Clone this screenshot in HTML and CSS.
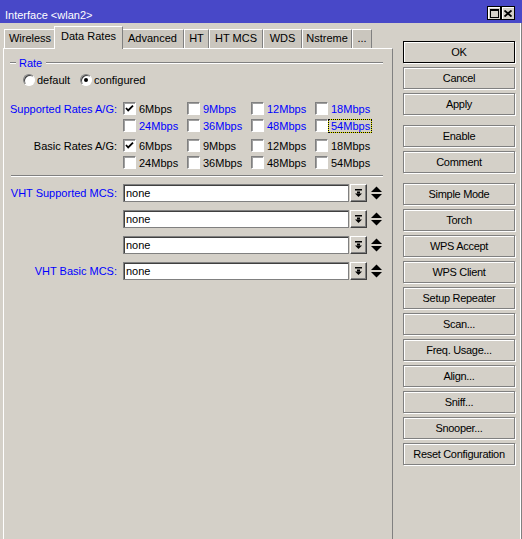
FILE: index.html
```html
<!DOCTYPE html>
<html>
<head>
<meta charset="utf-8">
<link rel="stylesheet" href="styles.css">
</head>
<body>
<div class="window">
  <div class="titlebar">
    <span class="title">Interface &lt;wlan2&gt;</span>
    <div class="tb-btns">
      <span class="tb-btn"><svg width="9" height="9" viewBox="0 0 9 9"><rect x="0.5" y="0.5" width="8" height="8" fill="none" stroke="#000"/><rect x="0" y="0" width="9" height="2" fill="#000"/></svg></span>
      <span class="tb-btn"><svg width="8" height="7" viewBox="0 0 8 7"><path d="M0.5 0.5 L7.5 6.5 M7.5 0.5 L0.5 6.5" stroke="#000" stroke-width="1.8" fill="none"/></svg></span>
    </div>
  </div>
  <div class="main">
    <div class="left">
      <div class="tabs">
        <div class="tab t-wireless">Wireless</div>
        <div class="tab active t-rates">Data Rates</div>
        <div class="tab t-adv">Advanced</div>
        <div class="tab t-ht">HT</div>
        <div class="tab t-htmcs">HT MCS</div>
        <div class="tab t-wds">WDS</div>
        <div class="tab t-nst">Nstreme</div>
        <div class="tab t-more">...</div>
      </div>
      <div class="panel">
        <div class="group-head">
          <div class="etch short"></div>
          <span class="legend">Rate</span>
          <div class="etch long"></div>
        </div>
        <div class="radio-row">
          <span class="radio"></span><span class="rtext">default</span>
          <span class="radio on"></span><span class="rtext">configured</span>
        </div>
        <div class="rates">
          <div class="rate-row">
            <div class="rlabel blue">Supported Rates A/G:</div>
            <div class="cell"><span class="cb"><svg width="11" height="11" viewBox="0 0 11 11"><polyline points="2,5 4.2,7.5 9,2.6" fill="none" stroke="#000" stroke-width="1.8"/></svg></span><span class="ctext">6Mbps</span></div>
            <div class="cell"><span class="cb"></span><span class="ctext blue">9Mbps</span></div>
            <div class="cell"><span class="cb"></span><span class="ctext blue">12Mbps</span></div>
            <div class="cell"><span class="cb"></span><span class="ctext blue">18Mbps</span></div>
          </div>
          <div class="rate-row">
            <div class="rlabel"></div>
            <div class="cell"><span class="cb"></span><span class="ctext blue">24Mbps</span></div>
            <div class="cell"><span class="cb"></span><span class="ctext blue">36Mbps</span></div>
            <div class="cell"><span class="cb"></span><span class="ctext blue">48Mbps</span></div>
            <div class="cell"><span class="cb"></span><span class="ctext blue focus">54Mbps</span></div>
          </div>
          <div class="rate-row group2">
            <div class="rlabel">Basic Rates A/G:</div>
            <div class="cell"><span class="cb"><svg width="11" height="11" viewBox="0 0 11 11"><polyline points="2,5 4.2,7.5 9,2.6" fill="none" stroke="#000" stroke-width="1.8"/></svg></span><span class="ctext">6Mbps</span></div>
            <div class="cell"><span class="cb"></span><span class="ctext">9Mbps</span></div>
            <div class="cell"><span class="cb"></span><span class="ctext">12Mbps</span></div>
            <div class="cell"><span class="cb"></span><span class="ctext">18Mbps</span></div>
          </div>
          <div class="rate-row">
            <div class="rlabel"></div>
            <div class="cell"><span class="cb"></span><span class="ctext">24Mbps</span></div>
            <div class="cell"><span class="cb"></span><span class="ctext">36Mbps</span></div>
            <div class="cell"><span class="cb"></span><span class="ctext">48Mbps</span></div>
            <div class="cell"><span class="cb"></span><span class="ctext">54Mbps</span></div>
          </div>
        </div>
        <div class="etch sep"></div>
        <div class="vht">
          <div class="vht-row">
            <div class="rlabel blue">VHT Supported MCS:</div>
            <div class="input">none</div>
            <div class="dd"><svg width="7" height="8" viewBox="0 0 7 8"><rect x="0" y="0" width="7" height="1.5" fill="#000"/><rect x="2" y="2.5" width="3" height="2" fill="#000"/><polygon points="0,4.5 7,4.5 3.5,8" fill="#000"/></svg></div>
            <div class="spin"><svg width="11" height="14" viewBox="0 0 11 14"><polygon points="0,6 5.5,0.5 11,6" fill="#000"/><polygon points="0,8 11,8 5.5,13.5" fill="#000"/></svg></div>
          </div>
          <div class="vht-row">
            <div class="rlabel"></div>
            <div class="input">none</div>
            <div class="dd"><svg width="7" height="8" viewBox="0 0 7 8"><rect x="0" y="0" width="7" height="1.5" fill="#000"/><rect x="2" y="2.5" width="3" height="2" fill="#000"/><polygon points="0,4.5 7,4.5 3.5,8" fill="#000"/></svg></div>
            <div class="spin"><svg width="11" height="14" viewBox="0 0 11 14"><polygon points="0,6 5.5,0.5 11,6" fill="#000"/><polygon points="0,8 11,8 5.5,13.5" fill="#000"/></svg></div>
          </div>
          <div class="vht-row">
            <div class="rlabel"></div>
            <div class="input">none</div>
            <div class="dd"><svg width="7" height="8" viewBox="0 0 7 8"><rect x="0" y="0" width="7" height="1.5" fill="#000"/><rect x="2" y="2.5" width="3" height="2" fill="#000"/><polygon points="0,4.5 7,4.5 3.5,8" fill="#000"/></svg></div>
            <div class="spin"><svg width="11" height="14" viewBox="0 0 11 14"><polygon points="0,6 5.5,0.5 11,6" fill="#000"/><polygon points="0,8 11,8 5.5,13.5" fill="#000"/></svg></div>
          </div>
          <div class="vht-row">
            <div class="rlabel blue">VHT Basic MCS:</div>
            <div class="input">none</div>
            <div class="dd"><svg width="7" height="8" viewBox="0 0 7 8"><rect x="0" y="0" width="7" height="1.5" fill="#000"/><rect x="2" y="2.5" width="3" height="2" fill="#000"/><polygon points="0,4.5 7,4.5 3.5,8" fill="#000"/></svg></div>
            <div class="spin"><svg width="11" height="14" viewBox="0 0 11 14"><polygon points="0,6 5.5,0.5 11,6" fill="#000"/><polygon points="0,8 11,8 5.5,13.5" fill="#000"/></svg></div>
          </div>
        </div>
      </div>
    </div>
    <div class="right">
      <div class="btn default">OK</div>
      <div class="btn">Cancel</div>
      <div class="btn">Apply</div>
      <div class="btn gap">Enable</div>
      <div class="btn">Comment</div>
      <div class="btn gap">Simple Mode</div>
      <div class="btn">Torch</div>
      <div class="btn">WPS Accept</div>
      <div class="btn">WPS Client</div>
      <div class="btn">Setup Repeater</div>
      <div class="btn">Scan...</div>
      <div class="btn">Freq. Usage...</div>
      <div class="btn">Align...</div>
      <div class="btn">Sniff...</div>
      <div class="btn">Snooper...</div>
      <div class="btn">Reset Configuration</div>
    </div>
  </div>
</div>
</body>
</html>
```
FILE: styles.css
```css
* { box-sizing: border-box; }
html, body { margin: 0; padding: 0; }
body {
  width: 522px;
  height: 539px;
  overflow: hidden;
  background: #d4d0c8;
  font-family: "Liberation Sans", Arial, sans-serif;
  font-size: 11px;
  color: #000;
}
.window { display: flex; flex-direction: column; height: 539px; }

.titlebar {
  height: 23px;
  background: #4848c8;
  display: flex;
  justify-content: space-between;
  align-items: flex-start;
  padding-left: 5px;
}
.title { color: #fff; line-height: 14px; padding-top: 8px; }
.tb-btns { display: flex; margin-top: 6px; margin-right: 7px; }
.tb-btn {
  width: 14px;
  height: 14px;
  background: #d4d0c8;
  border: 1px solid #000;
  box-shadow: inset 1px 1px 0 #fff;
  display: flex;
  align-items: center;
  justify-content: center;
}
.tb-btn svg { display: block; }

.main { flex: 1; display: flex; }
.left { width: 393px; padding-left: 3px; display: flex; flex-direction: column; }

.tabs { height: 25px; display: flex; align-items: flex-end; padding-left: 1px; }
.tab {
  height: 19px;
  line-height: 17px;
  text-align: center;
  background: #cac6be;
  border-top: 1px solid #fff;
  border-left: 1px solid #fff;
  border-right: 1px solid #808080;
  flex: none;
}
.tab.active {
  height: 23px;
  line-height: 19px;
  margin: 0 -2px -1px;
  background: #d4d0c8;
  position: relative;
  z-index: 1;
}
.t-wireless { width: 52px; }
.t-rates { width: 69px; }
.t-adv { width: 63px; }
.t-ht { width: 25px; }
.t-htmcs { width: 54px; }
.t-wds { width: 39px; }
.t-nst { width: 50px; }
.t-more { width: 20px; }

.panel {
  flex: 1;
  border-top: 1px solid #fff;
  border-left: 1px solid #fff;
  border-right: 1px solid #808080;
}

.blue { color: #0000ff; }

.etch { height: 2px; border-top: 1px solid #808080; border-bottom: 1px solid #fff; }
.group-head {
  display: flex;
  align-items: center;
  height: 14px;
  margin: 7px 9px 0 6px;
}
.etch.short { width: 6px; }
.etch.long { flex: 1; }
.legend { color: #0000ff; margin: 0 4px 0 3px; }

.radio-row {
  display: flex;
  align-items: center;
  height: 12px;
  margin-top: 4px;
  padding-left: 19px;
}
.radio {
  width: 12px;
  height: 12px;
  border-radius: 50%;
  background: #fff;
  border: 1px solid;
  border-color: #808080 #fff #fff #808080;
  box-shadow: inset 1px 1px 0 #404040;
  display: flex;
  align-items: center;
  justify-content: center;
}
.radio.on::after {
  content: "";
  width: 4px;
  height: 4px;
  border-radius: 50%;
  background: #000;
}
.rtext { margin-left: 2px; margin-right: 10px; }

.rates { margin-top: 14px; }
.rate-row { display: flex; align-items: center; height: 17px; }
.rate-row.group2 { margin-top: 3px; }
.rlabel { width: 113px; margin-right: 6px; text-align: right; flex: none; }
.cell { width: 64px; display: flex; align-items: center; flex: none; }
.cb {
  width: 13px;
  height: 13px;
  background: #fff;
  border: 1px solid;
  border-color: #808080 #fff #fff #808080;
  box-shadow: inset 1px 1px 0 #a0a0a0;
  flex: none;
}
.cb svg { display: block; }
.ctext { margin-left: 3px; }
.ctext.focus {
  margin-left: 0;
  padding: 0 1px 0 2px;
  line-height: 12px;
  border: 1px dotted #000;
  background: linear-gradient(#d4d0c8, #d4d0c8) padding-box, #e8e800 border-box;
}

.sep { margin: 4px 9px 0 7px; }

.vht { margin-top: 7px; }
.vht-row { display: flex; align-items: center; height: 18px; margin-top: 8px; }
.vht-row:first-child { margin-top: 0; }
.input {
  width: 226px;
  height: 18px;
  background: #fff;
  border: 1px solid #808080;
  box-shadow: inset 1px 1px 0 #404040;
  padding-left: 2px;
  line-height: 16px;
}
.dd {
  width: 17px;
  height: 18px;
  margin-left: 1px;
  background: #d4d0c8;
  border: 1px solid;
  border-color: #fff #404040 #404040 #fff;
  box-shadow: inset -1px -1px 0 #808080;
  display: flex;
  align-items: center;
  justify-content: center;
}
.dd svg, .spin svg { display: block; }
.spin { margin-left: 4px; width: 11px; height: 14px; }

.right {
  width: 129px;
  padding: 18px 0 0 10px;
  display: flex;
  flex-direction: column;
  box-shadow: inset -1px 0 0 #808080, inset -2px 0 0 #fff;
}
.btn {
  width: 112px;
  height: 22px;
  margin-top: 4px;
  border: 1px solid #808080;
  background: #d4d0c8;
  box-shadow: 1px 1px 0 #fff, inset 1px 1px 0 #fff;
  text-align: center;
  line-height: 21px;
  letter-spacing: -0.3px;
}
.btn.default { margin-top: 0; border-color: #000; }
.btn.gap { margin-top: 10px; }
```
